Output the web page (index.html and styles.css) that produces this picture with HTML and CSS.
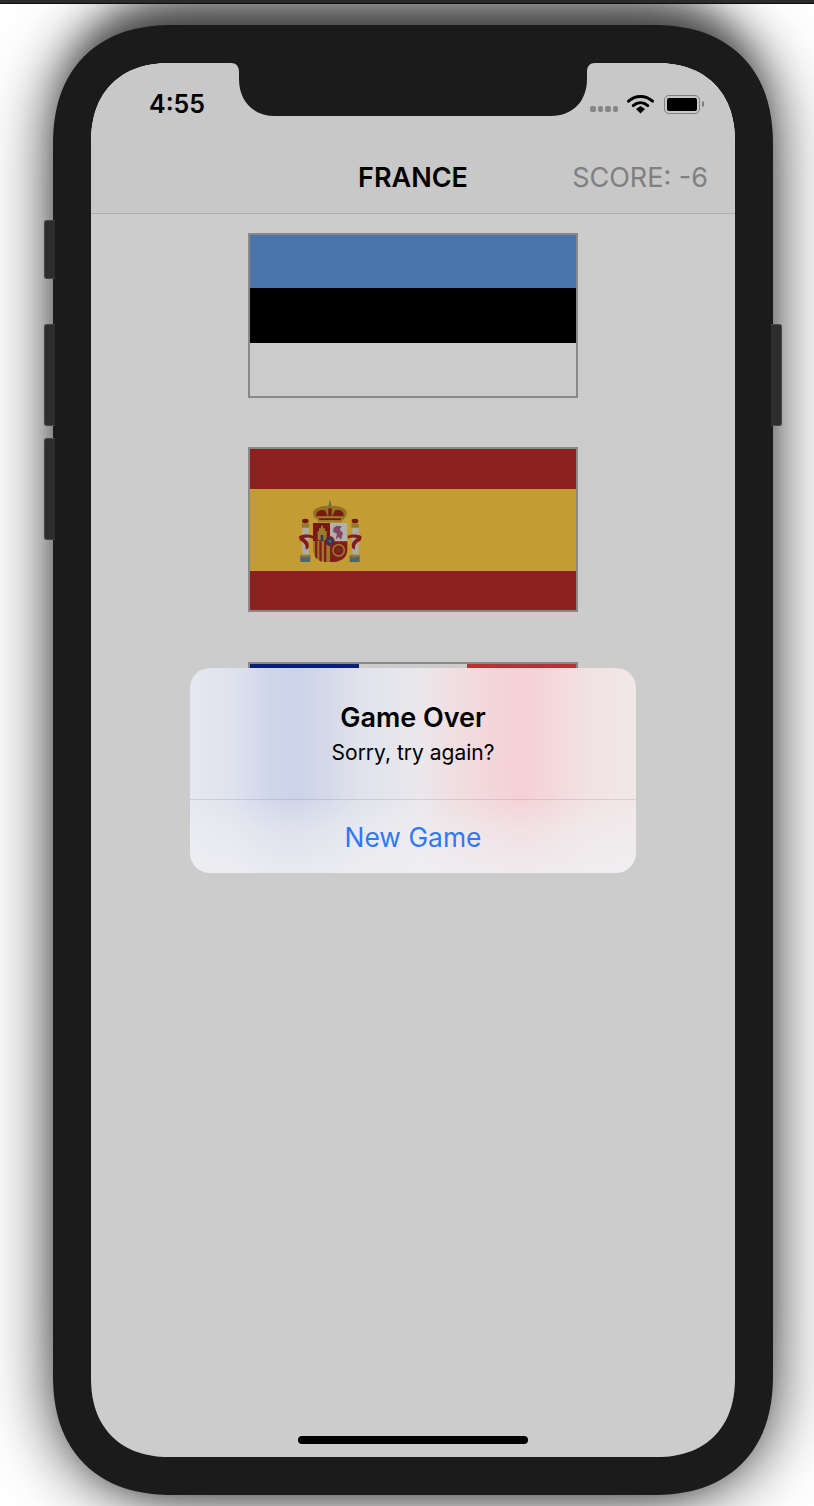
FILE: index.html
```html
<!DOCTYPE html>
<html lang="en">

<head>
    <meta charset="UTF-8">
    <meta name="viewport" content="width=device-width, initial-scale=1.0">
    <title>Guess the Flag</title>
    <link rel="stylesheet" href="styles.css">
</head>

<body>
    <div class="window-bar"></div>

    <div class="phone">
        <span class="side-btn mute"></span>
        <span class="side-btn vol-up"></span>
        <span class="side-btn vol-down"></span>
        <span class="side-btn power"></span>

        <div class="screen">
            <header class="nav">
                <div class="status">
                    <span class="time">4:55</span>
                    <div class="status-icons">
                        <div class="signal"><i></i><i></i><i></i><i></i></div>
                        <svg class="wifi" viewBox="0 0 27 20" width="27" height="20">
                            <path d="M1.5 7.2C8.4 .9 18.6 .9 25.5 7.2" fill="none" stroke="#000" stroke-width="3" stroke-linecap="round"/>
                            <path d="M6.2 11.6C10.6 7.8 16.4 7.8 20.8 11.6" fill="none" stroke="#000" stroke-width="3" stroke-linecap="round"/>
                            <path d="M9 15.1L13.5 11.9L18 15.1L13.5 19.6Z" fill="#000"/>
                        </svg>
                        <div class="battery"><div class="battery-level"></div></div>
                    </div>
                </div>
                <div class="title-row">
                    <h1 class="title">FRANCE</h1>
                    <span class="score">SCORE: -6</span>
                </div>
            </header>

            <main class="flags">
                <div class="flag flag-rows estonia"><i></i><i></i><i></i></div>
                <div class="flag spain">
                    <div class="spain-red"></div>
                    <div class="spain-gold">
                        <svg class="arms" viewBox="55 35 195 195" width="65" height="65">
                            <!-- pillars -->
                            <rect x="68" y="125" width="19" height="82" fill="#d8d8d0"/>
                            <rect x="218" y="125" width="19" height="82" fill="#d8d8d0"/>
                            <rect x="62" y="207" width="30" height="20" fill="#5b7f9c"/>
                            <rect x="210" y="207" width="30" height="20" fill="#5b7f9c"/>
                            <rect x="65" y="205" width="24" height="8" fill="#b8983a"/>
                            <rect x="213" y="205" width="24" height="8" fill="#b8983a"/>
                            <rect x="66" y="112" width="23" height="12" fill="#b8983a"/>
                            <rect x="215" y="112" width="23" height="12" fill="#b8983a"/>
                            <ellipse cx="77" cy="104" rx="10" ry="7" fill="#8d1f1c"/>
                            <ellipse cx="226" cy="104" rx="10" ry="7" fill="#8d1f1c"/>
                            <!-- ribbons -->
                            <path d="M58 150C70 142 90 144 100 148L100 157C88 153 80 153 72 156C86 164 90 174 86 186L78 190C80 176 72 168 60 162Z" fill="#a3231f"/>
                            <path d="M246 150C234 142 214 144 204 148L204 157C216 153 224 153 232 156C218 164 214 174 218 186L226 190C224 176 232 168 244 162Z" fill="#a3231f"/>
                            <!-- crown -->
                            <path d="M151 40L156 60L146 60Z" fill="#6f8a5c"/>
                            <path d="M103 92C92 70 112 58 150 58C190 58 210 70 198 92L190 100H112Z" fill="#b8902c"/>
                            <path d="M112 92C104 76 122 68 136 72L144 90ZM190 92C198 76 180 68 166 72L158 90ZM146 66H156V90H146Z" fill="#97201c"/>
                            <path d="M111 90H191L186 108H116Z" fill="#c49a33"/>
                            <rect x="118" y="96" width="66" height="5" fill="#8d1f1c"/>
                            <!-- shield -->
                            <path d="M100 110H151V165H100Z" fill="#97201c"/>
                            <path d="M151 110H203V165H151Z" fill="#dcdcd8"/>
                            <path d="M100 165H151V227C122 229 100 216 100 190Z" fill="#c49a33"/>
                            <path d="M106 165h7v54l-7 -8ZM119 165h7v61l-7 -3ZM133 165h7v62h-7Z" fill="#a3231f"/>
                            <path d="M151 165H203V190C203 216 180 229 151 227Z" fill="#a3231f"/>
                            <circle cx="177" cy="192" r="17" fill="none" stroke="#b8983a" stroke-width="5"/>
                            <circle cx="177" cy="192" r="5" fill="#3f6b3c"/>
                            <!-- castle -->
                            <path d="M114 162V134H118V126H124V118H130V126H136V134H141V162Z" fill="#c49a33"/>
                            <rect x="123" y="146" width="8" height="16" fill="#2c4f8c"/>
                            <!-- lion -->
                            <path d="M162 124L172 118L186 120L180 130L190 140L184 160L176 152L168 160L172 142L160 136Z" fill="#a3577f"/>
                            <!-- centre -->
                            <ellipse cx="151" cy="165" rx="14" ry="15" fill="#a3231f"/>
                            <ellipse cx="151" cy="165" rx="10" ry="11" fill="#2c4f8c"/>
                            <circle cx="151" cy="165" r="3" fill="#c49a33"/>
                        </svg>
                    </div>
                    <div class="spain-red"></div>
                </div>
                <div class="flag flag-cols france"><i></i><i></i><i></i></div>
            </main>

            <div class="dim">
                <div class="alert">
                    <div class="alert-body">
                        <h2 class="alert-title">Game Over</h2>
                        <p class="alert-text">Sorry, try again?</p>
                    </div>
                    <button class="alert-btn">New Game</button>
                </div>
            </div>

            <svg class="notch" viewBox="0 0 364 54" width="364" height="54">
                <path d="M0 0C5 0 8 3 8 9V16C8 38 22 53 44 53H320C342 53 356 38 356 16V9C356 3 359 0 364 0Z" fill="#1b1b1b"/>
            </svg>
            <div class="home-bar"></div>
        </div>
    </div>
</body>

</html>
```

FILE: styles.css
```css
* {
    box-sizing: border-box;
}

html,
body {
    margin: 0;
    height: 1506px;
    overflow: hidden;
}

body {
    font-family: 'Inter', 'Liberation Sans', sans-serif;
    background: #fff;
    color: #000;
}

.window-bar {
    height: 4px;
    background: #2b2b2b;
    border-bottom: 1px solid #0c0c0c;
    position: relative;
    z-index: 2;
}

.phone {
    position: relative;
    width: 720px;
    height: 1470px;
    margin: 21px 0 0 53px;
    padding: 38px;
    background: #1b1b1b;
    border-radius: 120px;
    corner-shape: superellipse(1.2);
    box-shadow: 0 0 66px rgba(0, 0, 0, 0.8), 0 -50px 40px -20px rgba(0, 0, 0, 0.5), 0 20px 30px -20px rgba(0, 0, 0, 0.3);
}

.side-btn {
    position: absolute;
    width: 11px;
    background: #2d2d2d;
    border: 1px solid #464646;
}

.mute,
.vol-up,
.vol-down {
    left: -9px;
    border-radius: 3px 0 0 3px;
    border-right: none;
}

.mute {
    top: 195px;
    height: 59px;
}

.vol-up {
    top: 299px;
    height: 102px;
}

.vol-down {
    top: 413px;
    height: 102px;
}

.power {
    right: -9px;
    top: 299px;
    height: 102px;
    border-radius: 0 3px 3px 0;
    border-left: none;
}

.screen {
    position: relative;
    height: 100%;
    background: #fff;
    border-radius: 80px;
    corner-shape: superellipse(1.2);
    overflow: hidden;
}

.nav {
    height: 151px;
    background: #fafafa;
    border-bottom: 1px solid #dcdcdc;
}

.status {
    display: flex;
    align-items: center;
    justify-content: space-between;
    height: 78px;
    padding: 4px 35px 0 58px;
}

.time {
    font-size: 25px;
    font-weight: 600;
}

.status-icons {
    display: flex;
    align-items: center;
}

.signal {
    display: flex;
    gap: 2px;
    margin: 10px 9px 0 0;
}

.signal i {
    width: 5.5px;
    height: 6px;
    border-radius: 2px;
    background: #a8a8a8;
}

.wifi {
    margin-right: 10px;
}

.battery {
    position: relative;
    width: 36px;
    height: 19px;
    padding: 2px;
    border: 1.5px solid #a0a0a0;
    border-radius: 5px;
}

.battery::after {
    content: "";
    position: absolute;
    right: -5px;
    top: 5px;
    width: 2px;
    height: 6px;
    border-radius: 0 2px 2px 0;
    background: #a0a0a0;
}

.battery-level {
    height: 100%;
    border-radius: 2px;
    background: #000;
}

.title-row {
    position: relative;
    height: 72px;
    display: flex;
    align-items: center;
    justify-content: center;
}

.title {
    margin: 0;
    font-size: 27px;
    font-weight: 600;
}

.score {
    position: absolute;
    right: 27px;
    font-size: 27px;
    color: #a0a0a0;
}

.flags {
    display: flex;
    flex-direction: column;
    align-items: center;
    gap: 49.5px;
    padding-top: 18.9px;
}

.flag {
    display: flex;
    width: 330px;
    height: 165px;
    flex: none;
    border: 2px solid #acacac;
}

.flag-rows,
.spain {
    flex-direction: column;
}

.flag-cols i {
    flex: 1;
}

.estonia i {
    height: 53px;
}

.estonia i:nth-child(1) {
    background: #5c92d8;
}

.estonia i:nth-child(2) {
    height: 55px;
    background: #000;
}

.estonia i:nth-child(3) {
    background: #fff;
}

.spain-red {
    height: 40px;
    background: #b32828;
}

.spain-red:last-child {
    height: 39px;
}

.spain-gold {
    flex: 1;
    display: flex;
    align-items: center;
    padding-left: 48px;
    background: #f5c341;
}

.france i:nth-child(1) {
    background: #0c279b;
}

.france i:nth-child(2) {
    background: #fff;
}

.france i:nth-child(3) {
    background: #e24242;
}

.dim {
    position: absolute;
    inset: 0;
    display: flex;
    align-items: center;
    justify-content: center;
    padding-top: 20px;
    background: rgba(0, 0, 0, 0.2);
}

/* flag blurred behind the alert, painted as gradients */
.alert {
    width: 446px;
    height: 205px;
    display: flex;
    flex-direction: column;
    border-radius: 20px;
    overflow: hidden;
    background:
        linear-gradient(to bottom, rgba(239, 239, 242, 0) 62%, rgba(239, 239, 242, 0.5) 78%, rgba(239, 239, 242, 0.85) 100%),
        linear-gradient(to right, #e5e8f0 0, #e0e3ee 40px, #d8dcec 60px, #d0d6ea 80px, #ccd3e8 107px, #d5daea 140px, #e0e2ec 170px, #eae8ec 230px, #efe0e3 257px, #f3d7db 297px, #f5d0d5 330px, #f4d6d9 357px, #f2e2e3 397px, #f2e7e7 446px);
}

.alert-body {
    height: 132px;
    padding-top: 33px;
    text-align: center;
    border-bottom: 1px solid rgba(60, 60, 90, 0.14);
}

.alert-title {
    margin: 0;
    font-size: 27px;
    font-weight: 600;
    line-height: 34px;
}

.alert-text {
    margin: 3px 0 0;
    font-size: 21px;
    line-height: 30px;
}

.alert-btn {
    flex: 1;
    padding: 2px 0 0;
    border: none;
    background: none;
    font-family: inherit;
    font-size: 26.4px;
    color: #3079f5;
}

.notch {
    position: absolute;
    left: 140px;
    top: 0;
}

.home-bar {
    position: absolute;
    left: 207px;
    bottom: 13px;
    width: 230px;
    height: 8px;
    border-radius: 4px;
    background: #000;
}
```
